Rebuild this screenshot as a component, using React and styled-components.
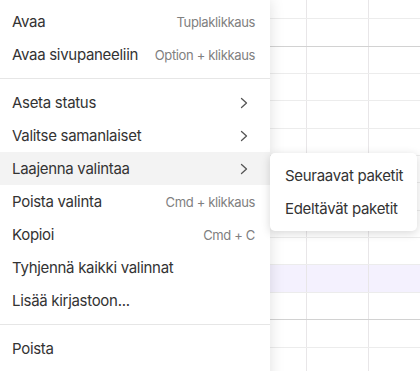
import React from "react";
import styled, { createGlobalStyle } from "styled-components";

const Global = createGlobalStyle`
  html, body { margin: 0; padding: 0; background: #fff; }
  body { width: 420px; height: 371px; overflow: hidden; font-family: Inter, "Noto Sans", sans-serif; }
`;

const Page = styled.div`
  position: relative;
  width: 420px;
  height: 371px;
  overflow: hidden;
`;

const Sheet = styled.div`
  display: flex;
  flex-direction: column;
`;

const Row = styled.div`
  box-sizing: border-box;
  height: ${(p) => p.$h}px;
  display: grid;
  grid-template-columns: 307px 62px 1fr;
  border-bottom: 1px solid ${(p) => (p.$strong ? "#d2d2d2" : "#ececec")};
  background: ${(p) => (p.$selected ? "#f4f1fe" : "#fff")};
`;

const Cell = styled.div`
  box-sizing: border-box;
  border-right: 1px solid #e8e6e8;
  &:last-child { border-right: none; }
`;

const Menu = styled.div`
  position: absolute;
  left: 0;
  top: 0;
  width: 270px;
  height: 400px;
  box-sizing: border-box;
  padding-top: 5px;
  background: #fff;
  box-shadow: 0 0 14px rgba(0, 0, 0, 0.13);
  display: flex;
  flex-direction: column;
`;

const Item = styled.div`
  height: 33px;
  display: flex;
  align-items: center;
  justify-content: space-between;
  padding: 0 15px 0 12px;
  background: ${(p) => (p.$active ? "#f3f3f3" : "transparent")};
  color: #333;
  font-size: 15px;
  letter-spacing: -0.3px;
`;

const Shortcut = styled.span`
  color: #808080;
  font-size: 13px;
  letter-spacing: -0.35px;
`;

const Separator = styled.div`
  height: 1px;
  margin: 7px 0;
  background: #e6e6e6;
`;

const Chevron = styled.svg`
  width: 8px;
  height: 12px;
  margin-right: 7px;
`;

const SubMenu = styled.div`
  position: absolute;
  left: 270px;
  top: 153px;
  width: 147px;
  box-sizing: border-box;
  padding: 6px 0;
  background: #fff;
  border-radius: 5px;
  box-shadow: 0 2px 10px rgba(0, 0, 0, 0.16);
`;

const SubItem = styled.div`
  height: 33px;
  display: flex;
  align-items: center;
  padding-left: 15px;
  color: #333;
  font-size: 15px;
  letter-spacing: -0.3px;
`;

const rows = [
  { h: 19 },
  { h: 28, strong: true },
  { h: 27 },
  { h: 27 },
  { h: 28 },
  { h: 27 },
  { h: 27 },
  { h: 28 },
  { h: 27 },
  { h: 27 },
  { h: 28, selected: true },
  { h: 27, strong: true },
  { h: 28 },
  { h: 28 },
];

const Arrow = () => (
  <Chevron viewBox="0 0 8 12">
    <path d="M1.5 1.5 L6.5 6 L1.5 10.5" fill="none" stroke="#555" strokeWidth="1.3" strokeLinecap="round" strokeLinejoin="round" />
  </Chevron>
);

export default function App() {
  return (
    <Page>
      <Global />
      <Sheet>
        {rows.map((r, i) => (
          <Row key={i} $h={r.h} $strong={r.strong} $selected={r.selected}>
            <Cell />
            <Cell />
            <Cell />
          </Row>
        ))}
      </Sheet>
      <Menu>
        <Item>Avaa<Shortcut>Tuplaklikkaus</Shortcut></Item>
        <Item>Avaa sivupaneeliin<Shortcut>Option + klikkaus</Shortcut></Item>
        <Separator />
        <Item>Aseta status<Arrow /></Item>
        <Item>Valitse samanlaiset<Arrow /></Item>
        <Item $active>Laajenna valintaa<Arrow /></Item>
        <Item>Poista valinta<Shortcut>Cmd + klikkaus</Shortcut></Item>
        <Item>Kopioi<Shortcut>Cmd + C</Shortcut></Item>
        <Item>Tyhjennä kaikki valinnat</Item>
        <Item>Lisää kirjastoon...</Item>
        <Separator />
        <Item>Poista</Item>
      </Menu>
      <SubMenu>
        <SubItem>Seuraavat paketit</SubItem>
        <SubItem>Edeltävät paketit</SubItem>
      </SubMenu>
    </Page>
  );
}
